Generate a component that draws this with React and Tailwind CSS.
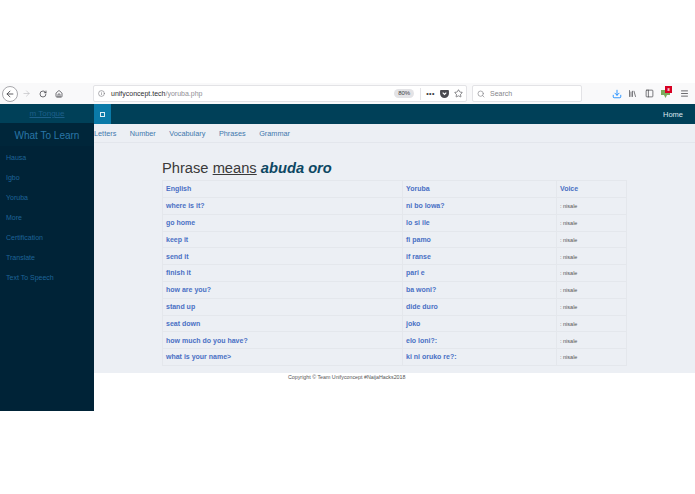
import React from 'react';
import { Download, Info, Search, Star, Home, RotateCw, ArrowLeft, ArrowRight, Menu, PanelLeft, Library } from 'lucide-react';

const links = ['Hausa', 'Igbo', 'Yoruba', 'More', 'Certification', 'Translate', 'Text To Speech'];
const tabs = ['Letters', 'Number', 'Vocabulary', 'Phrases', 'Grammar'];
const rows = [
    ['where is it?', 'ni bo lowa?'],
    ['go home', 'lo si ile'],
    ['keep it', 'fi pamo'],
    ['send it', 'if ranse'],
    ['finish it', 'pari e'],
    ['how are you?', 'ba woni?'],
    ['stand up', 'dide duro'],
    ['seat down', 'joko'],
    ['how much do you have?', 'elo loni?:'],
    ['what is your name>', 'ki ni oruko re?:'],
];

const Toolbar = () => (
    <div className="h-[21px] flex items-center bg-[#f9f9fa] text-[#3d3d42]">
        <div className="w-[16px] h-[16px] ml-[2px] rounded-full border border-[#a8a8ac] bg-white flex items-center justify-center">
            <ArrowLeft size={10} strokeWidth={2} />
        </div>
        <ArrowRight size={9} strokeWidth={1.5} className="ml-[4px] text-[#b4b4b8]" />
        <RotateCw size={8} strokeWidth={2.2} className="ml-[8px]" />
        <Home size={8} strokeWidth={2.2} className="ml-[8px]" />
        <div className="ml-[30px] w-[374px] h-[17px] bg-white border border-[#e3e3e6] rounded-[2px] flex items-center text-[7px]">
            <Info size={7} className="ml-[4px] text-[#77777c]" />
            <span className="ml-[6px] pt-[1px] text-[#2f2f33]">unifyconcept.tech<span className="text-[#8f8f95]">/yoruba.php</span></span>
            <span className="ml-auto w-[20px] h-[9px] rounded-full bg-[#e3e3e6] text-[6px] leading-[9px] text-center">80%</span>
            <span className="ml-[6px] w-px h-[12px] bg-[#e3e3e6]" />
            <span className="ml-[5px] font-bold tracking-[0.5px] leading-[7px]">•••</span>
            <svg viewBox="0 0 10 9" className="ml-[5px] w-[9px] h-[8px]">
                <path d="M1 0h8a1 1 0 0 1 1 1v3a5 5 0 0 1-10 0V1a1 1 0 0 1 1-1z" fill="#4a4a4f" />
                <path d="M3 3l2 2 2-2" fill="none" stroke="#fff" strokeWidth="1.2" />
            </svg>
            <Star size={9} strokeWidth={1.6} className="ml-[5px] mr-[3px]" />
        </div>
        <div className="ml-[5px] w-[110px] h-[17px] bg-white border border-[#e3e3e6] rounded-[2px] flex items-center text-[7px] text-[#85858a]">
            <Search size={8} className="ml-[4px]" />
            <span className="ml-[5px] pt-[1px]">Search</span>
        </div>
        <Download size={10} strokeWidth={2} className="ml-[30px] text-[#0a84ff]" />
        <Library size={9} strokeWidth={1.8} className="ml-[6px]" />
        <PanelLeft size={9} strokeWidth={1.8} className="ml-[8px]" />
        <div className="relative ml-[7px] w-[10px] h-[9px]">
            <svg viewBox="0 0 10 9" className="w-[10px] h-[9px]">
                <path d="M0 1h9v5H6l-1.500 3L3 6H0z" fill="#7cab5c" />
            </svg>
            <span className="absolute -top-[3px] left-[4px] w-[7px] h-[7px] bg-[#d70022] text-white text-[4px] leading-[7px] text-center font-bold">8</span>
        </div>
        <Menu size={9} strokeWidth={2} className="ml-[9px]" />
    </div>
);

const Sidebar = () => (
    <aside className="w-[94px] h-[307px] shrink-0 bg-[#002337] text-[#1f6397]">
        <div className="h-[20px] bg-[#004058] flex items-center justify-center text-[8px] underline text-[#1d5f8a]">m Tongue</div>
        <div className="h-[23px] mt-[-1px] pt-[1px] flex items-center justify-center text-[10px] text-[#2a76a8] bg-[#00263a]">What To Learn</div>
        <ul className="mt-[2px] text-[7px]">
            {links.map((link) => (
                <li key={link} className="h-[20.100px] pl-[6px] flex items-center">{link}</li>
            ))}
        </ul>
    </aside>
);

const App = () => {
    return (
        <div className="w-[695px] h-[494px] bg-white overflow-hidden font-['Liberation_Sans',Arial,sans-serif]">
            <div className="h-[83px]" />
            <Toolbar />
            <div className="flex">
                <Sidebar />
                <main className="flex-1 min-w-0">
                    <div className="h-[20px] bg-[#004058] flex items-center text-white">
                        <div className="w-[17px] h-full bg-[#0a7aa8] flex items-center justify-center">
                            <span className="w-[5px] h-[5px] border border-[#dfeef5]" />
                        </div>
                        <span className="ml-auto mr-[12px] pt-[1px] text-[7.500px] text-[#dbe7ee]">Home</span>
                    </div>
                    <div className="bg-[#eceff4] h-[249px]">
                        <nav className="h-[19px] pt-[2px] border-b border-[#e3e6ec] flex items-center gap-[13.500px] text-[7.300px] text-[#3f78ad]">
                            {tabs.map((tab) => (
                                <span key={tab}>{tab}</span>
                            ))}
                        </nav>
                        <h1 className="ml-[68px] mt-[15px] h-[21px] text-[14.700px] leading-[21px] text-[#3a3a3a]">
                            Phrase <span className="underline">means</span> <b className="italic text-[#0d4763]">abuda oro</b>
                        </h1>
                        <table className="ml-[68px] mt-[1px] w-[464px] table-fixed border-collapse text-[7px] font-bold text-[#4a70c4]">
                            <colgroup>
                                <col className="w-[240px]" />
                                <col className="w-[154px]" />
                                <col className="w-[70px]" />
                            </colgroup>
                            <tbody>
                                <tr className="h-[17px]">
                                    <td className="border border-[#e4e7ec] pl-[3px]">English</td>
                                    <td className="border border-[#e4e7ec] pl-[3px]">Yoruba</td>
                                    <td className="border border-[#e4e7ec] pl-[3px]">Voice</td>
                                </tr>
                                {rows.map(([english, yoruba]) => (
                                    <tr key={english} className="h-[16.800px]">
                                        <td className="border border-[#e4e7ec] pl-[3px] pt-[1px]">{english}</td>
                                        <td className="border border-[#e4e7ec] pl-[3px] pt-[1px]">{yoruba}</td>
                                        <td className="border border-[#e4e7ec] pl-[3px] pt-[1px] text-[5.500px] font-normal text-[#555]">: nisale</td>
                                    </tr>
                                ))}
                            </tbody>
                        </table>
                    </div>
                    <p className="mt-[1px] ml-[194px] text-[5.300px] leading-[7px] text-[#555]">Copyright © Team Unifyconcept #NaijaHacks2018</p>
                </main>
            </div>
        </div>
    );
};

export default App;
